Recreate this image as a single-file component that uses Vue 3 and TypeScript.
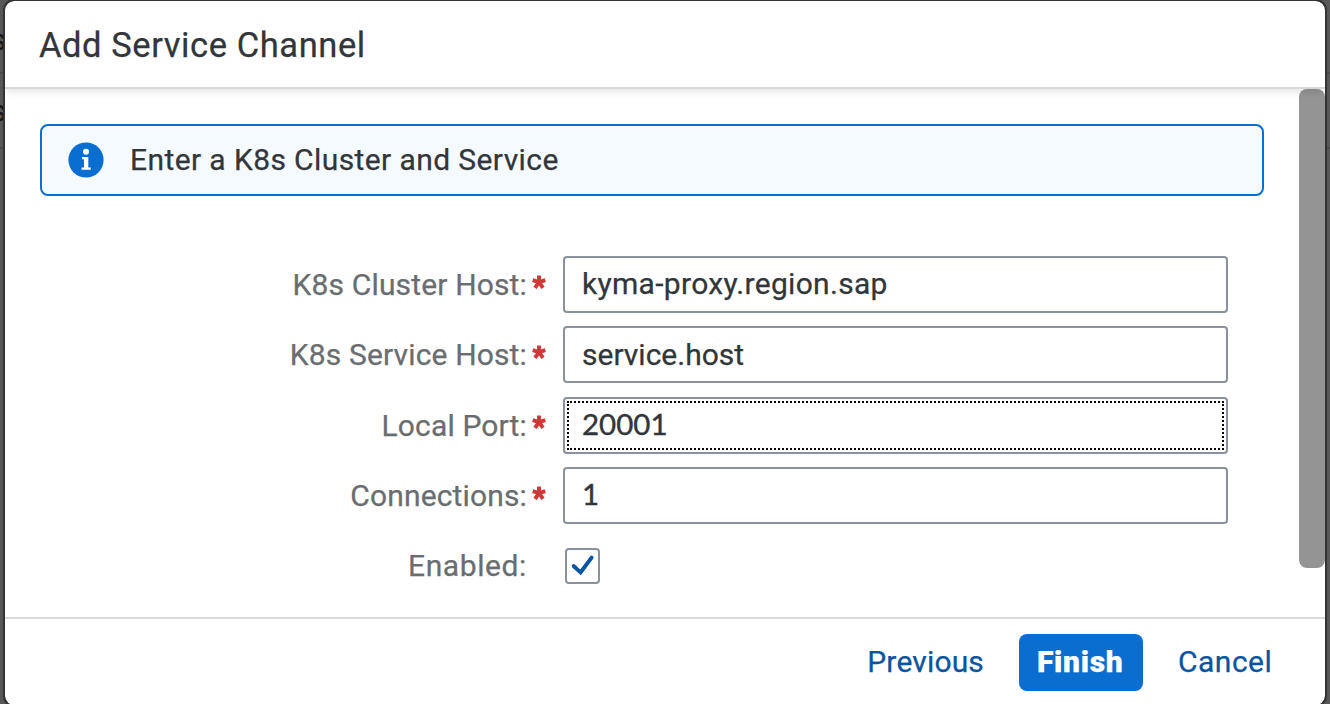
<script setup lang="ts">
import { ref } from 'vue'

interface Field {
  id: string
  label: string
  value: string
  numeric?: boolean
  focused?: boolean
}

const fields = ref<Field[]>([
  { id: 'cluster', label: 'K8s Cluster Host:', value: 'kyma-proxy.region.sap' },
  { id: 'service', label: 'K8s Service Host:', value: 'service.host' },
  { id: 'port', label: 'Local Port:', value: '20001', numeric: true, focused: true },
  { id: 'connections', label: 'Connections:', value: '1', numeric: true },
])
</script>

<template>
  <div class="backdrop">
    <div class="page-text"><span>s</span><span>s</span></div>
    <section class="dialog" role="dialog">
      <header class="header"><h1 class="title">Add Service Channel</h1></header>
      <main class="content">
        <div class="strip">
          <svg class="info" viewBox="0 0 36 36">
            <circle cx="18" cy="18" r="17.6" fill="#0a6ed1" />
            <circle cx="18" cy="9.8" r="3" fill="#fff" />
            <path d="M14 15h6.3v10.6h2.5v2.2h-9.2v-2.2H16v-8.4h-2z" fill="#fff" />
          </svg>
          <span class="strip-text">Enter a K8s Cluster and Service</span>
        </div>
        <form class="form">
          <div v-for="f in fields" :key="f.id" class="row">
            <div class="label"><span :class="f.id">{{ f.label }}</span></div>
            <svg class="star" viewBox="0 0 14 14">
              <path d="M7 7.2V0.4M7 7.2L0.7 5.2M7 7.2L3 12.8M7 7.2L11 12.8M7 7.2L13.3 5.2" stroke="#d03838" stroke-width="3.9" fill="none" />
            </svg>
            <div class="field" :class="{ focused: f.focused }">
              <span class="value" :class="['v-' + f.id, { numeric: f.numeric }]">{{ f.value }}</span>
            </div>
          </div>
          <div class="row">
            <div class="label"><span class="enabled">Enabled:</span></div>
            <div class="checkbox">
              <svg viewBox="0 0 32 32"><path d="M6.8 16.2L13.6 22.4L24.6 7.6" stroke="#0854a0" stroke-width="4" stroke-linecap="round" fill="none" /></svg>
            </div>
          </div>
        </form>
        <div class="scrollbar"></div>
      </main>
      <footer class="footer">
        <span class="button previous">Previous</span>
        <span class="button finish">Finish</span>
        <span class="button cancel">Cancel</span>
      </footer>
    </section>
  </div>
</template>

<style>
body { overflow: hidden; background: #565656; }
</style>

<style scoped>
* { box-sizing: border-box; }
.backdrop {
  position: relative;
  width: 1330px;
  height: 704px;
  padding: 1px 5px 0;
  overflow: hidden;
  background: linear-gradient(#4b4b4b 0 0) 0 72px / 100% 2px no-repeat, linear-gradient(#4b4b4b 0 0) 0 147px / 100% 2px no-repeat, #575757;
  font-family: Roboto, "Liberation Sans", sans-serif;
  font-size: 30px;
  color: #32363a;
  -webkit-text-stroke-width: .25px;
}
.page-text {
  position: absolute;
  left: -9px;
  top: 22px;
  display: flex;
  flex-direction: column;
  font-size: 30px;
  line-height: 36px;
  gap: 35px;
  color: #161616;
}
.dialog {
  position: relative;
  height: 704px;
  display: flex;
  flex-direction: column;
  overflow: hidden;
  border-radius: 9px;
  background: #fff;
  outline: 2px solid #333;
}
.header {
  position: relative;
  z-index: 1;
  flex: none;
  height: 88px;
  padding-left: 34px;
  display: flex;
  align-items: center;
  border-bottom: 2px solid #d9d9d9;
  box-shadow: 0 2px 8px rgba(0, 0, 0, .13);
}
.title { margin: 0; font-size: 34.5px; font-weight: 400; line-height: 40px; padding-top: 1px; letter-spacing: .58px; }
.content { position: relative; flex: 1; padding: 35px 61px 0 35px; }
.strip {
  height: 72px;
  display: flex;
  align-items: center;
  padding-left: 26px;
  gap: 26px;
  border: 2px solid #0a6ed1;
  border-radius: 8px;
  background: #f5faff;
}
.strip-text { letter-spacing: .4px; padding-bottom: 2px; }
.info { width: 36px; height: 36px; }
.form { display: flex; flex-direction: column; gap: 13.35px; padding-top: 60px; }
.row { display: flex; height: 57px; align-items: center; }
.label { width: 487px; text-align: right; color: #6a6d70; white-space: nowrap; letter-spacing: .15px; }
.enabled { letter-spacing: .6px; }
.star { width: 14px; height: 14px; margin: 0 17px 6px 5px; }
.field {
  position: relative;
  width: 665px;
  height: 57px;
  display: flex;
  align-items: center;
  padding-left: 17px;
  border: 2px solid #89919a;
  border-radius: 4px;
}
.value { padding-bottom: 2px; }
.v-cluster { letter-spacing: .3px; }
.v-service { padding-bottom: 0; }
.v-connections { padding-bottom: 1px; }
.focused::after {
  content: "";
  position: absolute;
  inset: 2px;
  border: 2px dotted #000;
}
.numeric { font-family: Lato, Roboto, sans-serif; font-size: 29.5px; padding-bottom: 4px; -webkit-text-stroke-width: .4px; }
.checkbox { width: 35px; height: 36px; margin-left: 38px; border: 2px solid #89919a; border-radius: 4px; }
.checkbox svg { display: block; width: 32px; height: 32px; }
.scrollbar {
  position: absolute;
  right: 0;
  top: 0;
  width: 26px;
  height: 479px;
  border-radius: 8px;
  background: #949494;
}
.footer {
  flex: none;
  height: 88px;
  border-top: 2px solid #d9d9d9;
  display: flex;
  justify-content: flex-end;
  align-items: center;
  padding-right: 35px;
  color: #0854a0;
}
.button { height: 57px; line-height: 55px; padding: 0 18px; white-space: nowrap; }
.previous { margin-right: 17px; letter-spacing: .15px; }
.finish { width: 124px; margin-right: 17px; border-radius: 8px; background: #0a6ed1; color: #fff; font-weight: 900; letter-spacing: .7px; }
.cancel { width: 130px; letter-spacing: .5px; }
</style>
